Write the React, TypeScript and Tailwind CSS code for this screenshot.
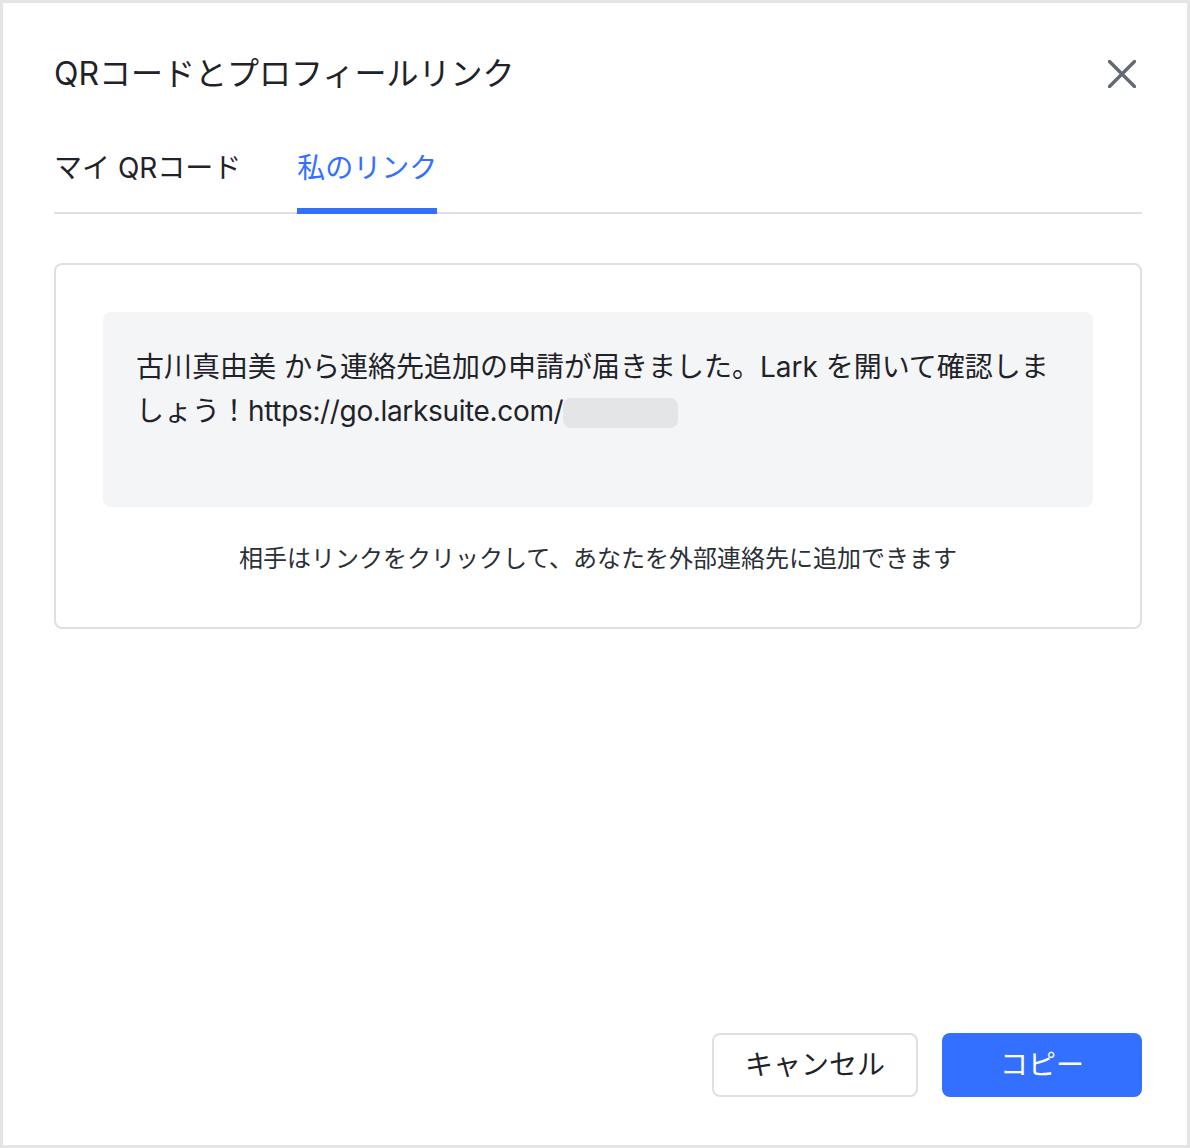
import { useState } from "react";

const font = "font-['Inter','Noto_Sans_CJK_JP',sans-serif]";

function CloseIcon() {
  return (
    <svg width="28" height="28" viewBox="0 0 28 28" fill="none">
      <path d="M1.5 1.5L26.5 26.5M26.5 1.5L1.5 26.5" stroke="#646a73" strokeWidth="3.4" strokeLinecap="round" />
    </svg>
  );
}

export default function App() {
  const [tab, setTab] = useState<"qr" | "link">("link");

  return (
    <div className={`${font} flex h-[1148px] w-[1190px] flex-col border-[3px] border-[#e5e5e5] bg-white pl-[51px] pr-[45px] pt-[49px] pb-[48px] text-[#1f2329]`}>
      <div className="flex items-center justify-between">
        <h1 className="text-[32px] leading-[44px] font-normal">QRコードとプロフィールリンク</h1>
        <button className="flex h-[40px] w-[40px] items-center justify-center" aria-label="閉じる">
          <CloseIcon />
        </button>
      </div>

      <div className="mt-[52px] flex gap-[56px] border-b-2 border-[#dee0e3]">
        <button
          onClick={() => setTab("qr")}
          className={`-mb-[2px] border-b-[6px] pb-[20px] text-[28px] leading-[40px] ${tab === "qr" ? "border-[#3370ff] text-[#3370ff]" : "border-transparent text-[#1f2329]"}`}
        >
          マイ QRコード
        </button>
        <button
          onClick={() => setTab("link")}
          className={`-mb-[2px] border-b-[6px] pb-[20px] text-[28px] leading-[40px] ${tab === "link" ? "border-[#3370ff] text-[#3370ff]" : "border-transparent text-[#1f2329]"}`}
        >
          私のリンク
        </button>
      </div>

      <div className="mt-[49px] rounded-[8px] border-2 border-[#dee0e3] p-[47px]">
        <div className="rounded-[8px] bg-[#f4f5f6] px-[33px] pt-[33px] pb-[74px] text-[28px] leading-[44px]">
          古川真由美 から連絡先追加の申請が届きました。Lark を開いて確認しましょう！
          <span className="tracking-[-0.35px]">https://go.larksuite.com/</span>
          <span className="inline-block h-[30px] w-[115px] rounded-[8px] bg-[#e4e5e7] align-middle" />
        </div>
        <p className="mt-[31px] text-center text-[24px] leading-[42px] text-[#2b2f36]">
          相手はリンクをクリックして、あなたを外部連絡先に追加できます
        </p>
      </div>

      <div className="mt-auto flex justify-end gap-[24px]">
        <button className="h-[64px] w-[206px] rounded-[8px] border-2 border-[#dee0e3] bg-white text-[28px] text-[#1f2329]">
          キャンセル
        </button>
        <button className="h-[64px] w-[200px] rounded-[8px] bg-[#3370ff] text-[28px] text-white">コピー</button>
      </div>
    </div>
  );
}
